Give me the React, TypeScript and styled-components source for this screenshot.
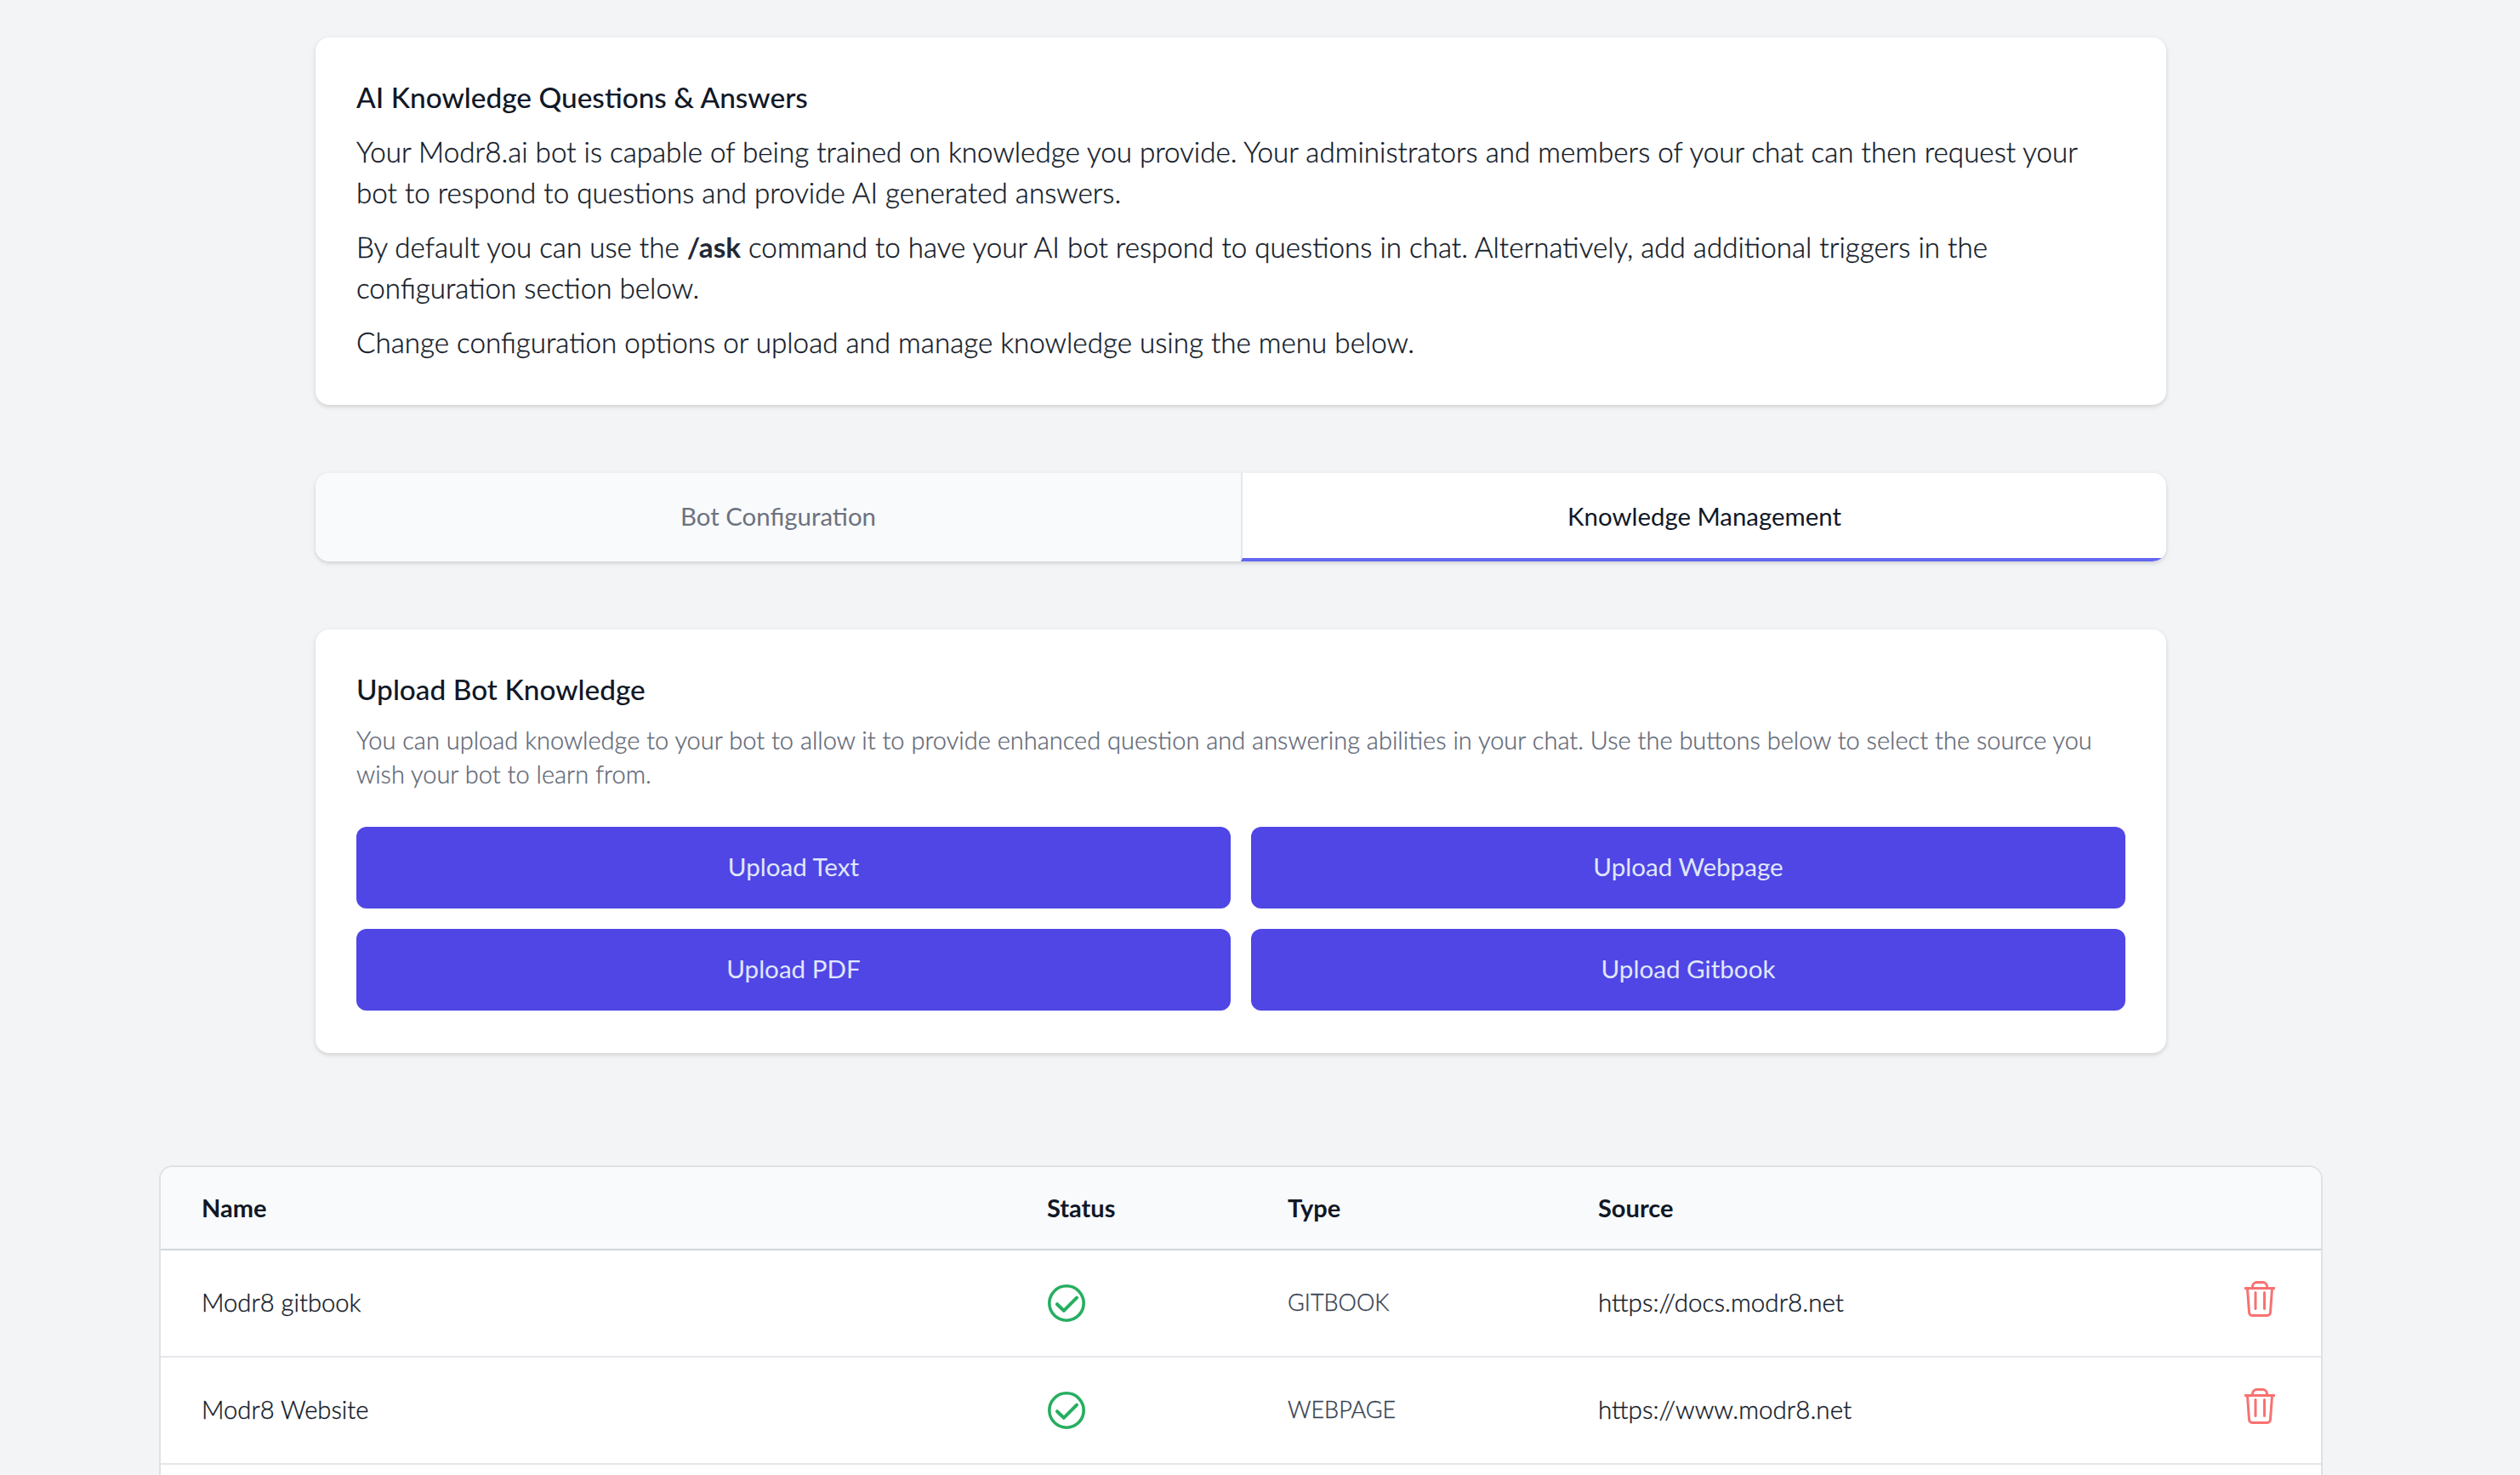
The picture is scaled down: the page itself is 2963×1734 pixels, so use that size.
import React from "react";
import styled, { createGlobalStyle } from "styled-components";

const GlobalStyle = createGlobalStyle`
  html, body {
    margin: 0;
    padding: 0;
    height: 100%;
    overflow: hidden;
    background-color: #f3f4f6;
  }
  * {
    box-sizing: border-box;
  }
`;

const Page = styled.div`
  width: 2918px;
  height: 1734px;
  overflow: hidden;
  padding-top: 44px;
  font-family: "Lato", "Noto Sans", sans-serif;
  font-weight: 300;
  color: #111827;
`;

const Narrow = styled.div`
  width: 2176px;
  margin: 0 auto;
`;

const Card = styled.section`
  background-color: #fff;
  border-radius: 16px;
  padding: 46px 48px 50px;
  box-shadow: 0 2px 6px rgba(0, 0, 0, 0.1), 0 2px 4px rgba(0, 0, 0, 0.06);
`;

const Title = styled.h2<{ $spaced?: boolean }>`
  margin: 0 0 ${(p) => (p.$spaced ? "16px" : "0")};
  font-size: 33.4px;
  line-height: 48px;
  font-weight: 500;
  color: #111827;
`;

const Para = styled.p`
  margin: 0 0 16px;
  font-size: 33.2px;
  line-height: 48px;
  -webkit-text-stroke: 0.35px currentColor;
  &:last-child {
    margin-bottom: 0;
  }
  strong {
    font-weight: 700;
    color: #1f2937;
    -webkit-text-stroke: 0;
  }
`;

const Tabs = styled.nav`
  display: grid;
  grid-template-columns: 1fr 1fr;
  height: 104px;
  margin: 80px 0;
  border-radius: 16px;
  overflow: hidden;
  box-shadow: 0 2px 6px rgba(0, 0, 0, 0.1), 0 2px 4px rgba(0, 0, 0, 0.06);
`;

const Tab = styled.div<{ $active?: boolean }>`
  display: flex;
  align-items: center;
  justify-content: center;
  font-size: 29.4px;
  font-weight: 400;
  color: ${(p) => (p.$active ? "#111827" : "#6b7280")};
  background-color: ${(p) => (p.$active ? "#fff" : "#f9fafb")};
  border-bottom: 4px solid ${(p) => (p.$active ? "#6366f1" : "transparent")};
  border-left: ${(p) => (p.$active ? "2px solid #e5e7eb" : "none")};
`;

const Description = styled.p`
  margin: 16px 0 42px;
  font-size: 29px;
  line-height: 40px;
  color: #5f6775;
  -webkit-text-stroke: 0.3px currentColor;
`;

const ButtonGrid = styled.div`
  display: grid;
  grid-template-columns: 1fr 1fr;
  gap: 24px;
`;

const UploadButton = styled.button`
  height: 96px;
  padding: 0 0 4px;
  border: none;
  border-radius: 12px;
  background-color: #4f46e5;
  box-shadow: 0 1px 2px rgba(0, 0, 0, 0.05);
  color: #e0e7ff;
  font-family: inherit;
  font-size: 29.6px;
  font-weight: 400;
`;

const Table = styled.div`
  width: 2544px;
  margin: 132px auto 0;
  background-color: #fff;
  border: 2px solid #dfe1e6;
  border-radius: 16px 16px 0 0;
  overflow: hidden;
`;

const Row = styled.div<{ $head?: boolean }>`
  display: grid;
  grid-template-columns: 994px 283px 365px 1fr 138px;
  align-items: center;
  height: ${(p) => (p.$head ? "98px" : "126px")};
  background-color: ${(p) => (p.$head ? "#f9fafb" : "#fff")};
  border-bottom: 2px solid ${(p) => (p.$head ? "#d1d5db" : "#e5e7eb")};
`;

const HeadCell = styled.div`
  padding: 0 0 2px 48px;
  font-size: 29px;
  font-weight: 700;
  color: #111827;
`;

const Cell = styled.div`
  padding: 0 0 3px 48px;
  font-size: 29.2px;
  font-weight: 300;
  color: #111827;
  -webkit-text-stroke: 0.35px currentColor;
  display: flex;
  align-items: center;
`;

const SourceCell = styled(Cell)`
  font-size: 29.6px;
`;

const TypeCell = styled(Cell)`
  font-size: 27px;
  color: #374151;
`;

const IconCell = styled.div`
  padding-left: 48px;
  display: flex;
  align-items: center;
`;

const TrashSvg = styled.svg`
  margin-bottom: 11px;
`;

const CheckIcon = () => (
  <svg width="46" height="46" viewBox="0 0 46 46" fill="none" stroke="#27ae60" strokeLinecap="round" strokeLinejoin="round">
    <circle cx="23" cy="23" r="20.2" strokeWidth="3.6" />
    <path d="M12 24.2l7.8 7.6L35 16.6" strokeWidth="4" />
  </svg>
);

const TrashIcon = () => (
  <TrashSvg width="36" height="42" viewBox="0 0 36 42" fill="none" stroke="#f87171" strokeWidth="3" strokeLinecap="round" strokeLinejoin="round">
    <path d="M1 8.5h34" />
    <path d="M9.5 8V6.5a5 5 0 0 1 5-5h7a5 5 0 0 1 5 5V8" />
    <path d="M3.5 9l2 27.5a4 4 0 0 0 4 4h17a4 4 0 0 0 4-4l2-27.5" />
    <path d="M13 13.5v19M23.5 13.5v19" />
  </TrashSvg>
);

const rows = [
  { name: "Modr8 gitbook", type: "GITBOOK", source: "https://docs.modr8.net" },
  { name: "Modr8 Website", type: "WEBPAGE", source: "https://www.modr8.net" },
];

export default function App() {
  return (
    <Page>
      <GlobalStyle />
      <Narrow>
        <Card>
          <Title $spaced>AI Knowledge Questions &amp; Answers</Title>
          <Para>
            Your Modr8.ai bot is capable of being trained on knowledge you provide. Your administrators and members of
            your chat can then request your bot to respond to questions and provide AI generated answers.
          </Para>
          <Para>
            By default you can use the <strong>/ask</strong> command to have your AI bot respond to questions in chat.
            Alternatively, add additional triggers in the configuration section below.
          </Para>
          <Para>Change configuration options or upload and manage knowledge using the menu below.</Para>
        </Card>
        <Tabs>
          <Tab>Bot Configuration</Tab>
          <Tab $active>Knowledge Management</Tab>
        </Tabs>
        <Card>
          <Title>Upload Bot Knowledge</Title>
          <Description>
            You can upload knowledge to your bot to allow it to provide enhanced question and answering abilities in your
            chat. Use the buttons below to select the source you wish your bot to learn from.
          </Description>
          <ButtonGrid>
            <UploadButton>Upload Text</UploadButton>
            <UploadButton>Upload Webpage</UploadButton>
            <UploadButton>Upload PDF</UploadButton>
            <UploadButton>Upload Gitbook</UploadButton>
          </ButtonGrid>
        </Card>
      </Narrow>
      <Table>
        <Row $head>
          <HeadCell>Name</HeadCell>
          <HeadCell>Status</HeadCell>
          <HeadCell>Type</HeadCell>
          <HeadCell>Source</HeadCell>
          <HeadCell />
        </Row>
        {rows.map((row) => (
          <Row key={row.name}>
            <Cell>{row.name}</Cell>
            <IconCell>
              <CheckIcon />
            </IconCell>
            <TypeCell>{row.type}</TypeCell>
            <SourceCell>{row.source}</SourceCell>
            <IconCell>
              <TrashIcon />
            </IconCell>
          </Row>
        ))}
        <Row />
      </Table>
    </Page>
  );
}
